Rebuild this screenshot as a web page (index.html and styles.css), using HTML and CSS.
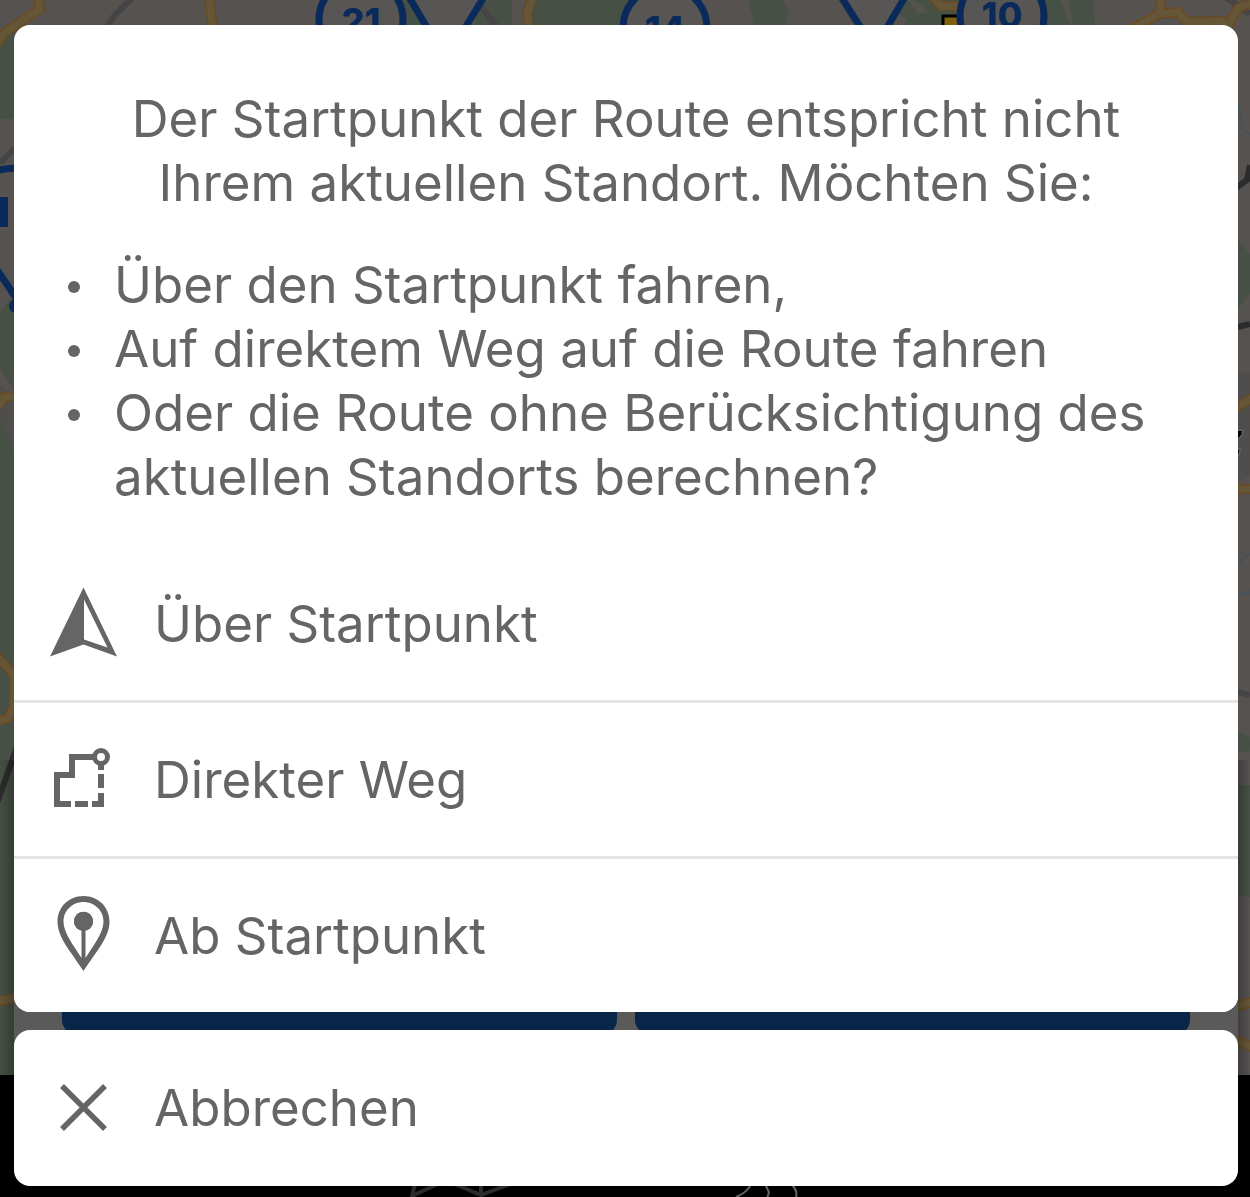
FILE: index.html
```
<!DOCTYPE html>
<html lang="de">
<head>
    <meta charset="UTF-8">
    <meta name="viewport" content="width=device-width, initial-scale=1.0">
    <title>Startpunkt der Route</title>
    <link rel="stylesheet" href="styles.css">
</head>
<body>
    <!-- dimmed map behind the sheet -->
    <svg class="map" viewBox="0 0 1250 1197" preserveAspectRatio="xMidYMin slice" aria-hidden="true">
        <defs>
            <linearGradient id="shadeLeft">
                <stop offset="0" stop-color="#000" stop-opacity="0"/>
                <stop offset="1" stop-color="#000" stop-opacity=".25"/>
            </linearGradient>
            <linearGradient id="shadeRight">
                <stop offset="0" stop-color="#000" stop-opacity=".25"/>
                <stop offset="1" stop-color="#000" stop-opacity="0"/>
            </linearGradient>
        </defs>
        <rect class="land" width="1250" height="1075"/>
        <g class="forest">
            <path d="M0 42L14 32V119H0z"/>
            <path d="M0 312L14 295V390L0 368z"/>
            <path d="M0 415L14 450V1075H0z"/>
            <path d="M398 0h16l26 30h-32zM482 0h30v30h-40zM530 0H690l-5 30H522l6-12zM748 0h35l5 12-2 18h-30z"/>
            <path d="M913 0h48v30h-62l8-10-7-6 8-14 10 14 12-2zM1040 0h20l10 24-4 6h-26zM1069 0h22l-9 16 8 14h-16zM1079 0h14l3 30h-12z"/>
            <path d="M1238 240l12 14v40l-12 14zM1238 732l12 5v14l-12 2zM1238 785h12v112l-12-3z"/>
        </g>
        <path class="patch" d="M0 385L14 395V448L0 415zM1238 372h12v104l-12 6z"/>
        <g class="track">
            <path d="M134 -4L114 16 106 30M0 163L14 149"/>
            <path d="M482 8L498 28M1218 -8L1250 14M1238 692L1250 695"/>
            <path class="dark" d="M1250 165L1247 180 1236 188M1238 327L1250 324M-4 806L18 744"/>
        </g>
        <g class="water">
            <path d="M1238 103L1243 130 1250 134M1240 564Q1242 557 1250 554M1240 594L1250 592"/>
        </g>
        <g class="road-edge">
            <path d="M38 -2L40 9 4 33-4 45M209 -2L213 30M533 -4L527 14 530 30M932 -4L941 6H957"/>
            <path d="M1130 30L1159 14 1162 -4M1159 14L1178 12 1186 22 1222 21 1228 26 1238 8 1254 2"/>
            <path d="M-2 406L4 397 16 396M-4 655L14 675V706L8 718-2 721M-2 1001L16 998"/>
            <path d="M1234 409L1252 398M1234 489H1252M1234 1007L1252 1002M1234 1039L1252 1047"/>
        </g>
        <g class="road">
            <path d="M38 -2L40 9 4 33-4 45M209 -2L213 30M533 -4L527 14 530 30M932 -4L941 6H957"/>
            <path d="M1130 30L1159 14 1162 -4M1159 14L1178 12 1186 22 1222 21 1228 26 1238 8 1254 2"/>
            <path d="M-2 406L4 397 16 396M-4 655L14 675V706L8 718-2 721M-2 1001L16 998"/>
            <path d="M1234 409L1252 398M1234 489H1252M1234 1007L1252 1002M1234 1039L1252 1047"/>
        </g>
        <path class="sign" d="M943 30V16H970V30z"/>
        <g class="route">
            <path class="area" d="M406 -8L432 36H460L487 -8z"/>
            <path class="area" d="M838 -8L866 36H882L908 -8z"/>
            <path d="M-4 268L18 301"/>
            <circle cx="361" cy="20" r="42"/>
            <circle cx="665" cy="28" r="42"/>
            <circle cx="1002" cy="16" r="42"/>
            <path d="M-4 171Q6 168 18 168"/>
        </g>
        <circle class="route-dot" cx="16" cy="306" r="7"/>
        <path class="route-dot" d="M0 197H8V227H0z"/>
        <g class="route-number">
            <text x="361" y="34">21</text>
            <text x="665" y="42">14</text>
            <text x="1002" y="28">10</text>
        </g>
        <text class="town" x="1219" y="454">z</text>
        <rect x="0" y="760" width="14" height="315" fill="url(#shadeLeft)"/>
        <rect x="1238" y="760" width="12" height="315" fill="url(#shadeRight)"/>
        <rect class="panel" x="14" y="800" width="1224" height="275"/>
        <rect class="panel-button" x="62" y="900" width="555" height="134" rx="14"/>
        <rect class="panel-button" x="635" y="900" width="555" height="134" rx="14"/>
        <rect y="1075" width="1250" height="122"/>
        <g class="tab-icon">
            <path d="M416 1180L412 1196 442 1182M450 1182L481 1195 516 1182M481 1180V1195"/>
            <path class="thin" d="M751 1184Q748 1192 736 1197M766 1186L769 1192 767 1199M791 1184Q798 1190 796 1198"/>
        </g>
    </svg>

    <main class="sheet">
        <section class="card">
            <div class="message">
                <p>Der Startpunkt der Route entspricht nicht Ihrem aktuellen Standort. Möchten Sie:</p>
                <ul>
                    <li>Über den Startpunkt fahren,</li>
                    <li>Auf direktem Weg auf die Route fahren</li>
                    <li>Oder die Route ohne Berücksichtigung des aktuellen Standorts berechnen?</li>
                </ul>
            </div>
            <button class="action" type="button">
                <svg class="icon" viewBox="0 0 68 80" aria-hidden="true">
                    <path fill-rule="evenodd" d="M33.500 3.500L67 72.500 33.500 60.500 0 72.500zM34 15.500V55.500L57.500 63.500z"/>
                </svg>
                Über Startpunkt
            </button>
            <button class="action" type="button">
                <svg class="icon" viewBox="0 0 68 80" aria-hidden="true">
                    <g fill="none" stroke="currentColor" stroke-width="6">
                        <path d="M43 17H22V35H7V64H21M25 64H38M42 64H51V53M51 48V34M51 30V22"/>
                        <circle cx="51" cy="17" r="6.500" stroke-width="5"/>
                    </g>
                </svg>
                Direkter Weg
            </button>
            <button class="action" type="button">
                <svg class="icon" viewBox="0 0 68 80" aria-hidden="true">
                    <path fill-rule="evenodd" d="M33.500 0C19 0 7.500 11 7.500 25.500C7.500 42 22 57 33.500 75C45 57 59.500 42 59.500 25.500C59.500 11 48 0 33.500 0zM33.500 6C44.500 6 53.500 14.500 53.500 25.500C53.500 37 43 50 35.500 62V34.500A9.500 9.500 0 1 0 31.500 34.500V62C24 50 13.500 37 13.500 25.500C13.500 14.500 22.500 6 33.500 6z"/>
                    <path d="M32.500 33H34.500V66H32.500z"/>
                    <circle cx="33.500" cy="25.500" r="9.500"/>
                </svg>
                Ab Startpunkt
            </button>
        </section>

        <section class="card">
            <button class="action cancel" type="button">
                <svg class="icon" viewBox="0 0 68 80" aria-hidden="true">
                    <path fill="none" stroke="currentColor" stroke-width="5.500" d="M12 18L55 61M55 18L12 61"/>
                </svg>
                Abbrechen
            </button>
        </section>
    </main>
</body>
</html>
```

FILE: styles.css
```
* {
    box-sizing: border-box;
}
body {
    margin: 0;
    min-height: 100vh;
    position: relative;
    overflow-x: hidden;
    background-color: #000;
    color: #656565;
    font-family: Inter, "Liberation Sans", sans-serif;
    font-size: 51px;
    line-height: 64px;
}

/* map */
.map {
    position: absolute;
    top: 0;
    left: 0;
    width: 100%;
    height: 100%;
}
.land {
    fill: #555250;
}
.forest {
    fill: #465044;
}
.patch {
    fill: #4f4e4c;
}
.track {
    fill: none;
    stroke: #454547;
    stroke-width: 6;
}
.track .dark {
    stroke: #2c2c2c;
}
.water {
    fill: none;
    stroke: #43525b;
    stroke-width: 2;
}
.road-edge {
    fill: none;
    stroke: #6a4a20;
    stroke-width: 10;
}
.road {
    fill: none;
    stroke: #665638;
    stroke-width: 7;
}
.sign {
    fill: #80600c;
    stroke: #000;
    stroke-width: 3;
}
.route {
    fill: #585654;
    stroke: #0a2a5c;
    stroke-width: 7;
}
.route-dot {
    fill: #0a2a5c;
}
.route-number {
    fill: #0a2a5c;
    font-size: 36px;
    font-weight: 800;
    text-anchor: middle;
}
.town {
    font-size: 42px;
    font-style: italic;
    font-weight: 600;
    stroke: #626262;
    stroke-width: 3;
    paint-order: stroke;
}
.panel {
    fill: #5a5a5a;
}
.panel-button {
    fill: #092548;
}
.tab-icon {
    fill: none;
    stroke: #2b2b2b;
    stroke-width: 4;
}
.tab-icon .thin {
    stroke: #666;
    stroke-width: 2;
}

/* action sheet */
.sheet {
    position: relative;
    display: flex;
    flex-direction: column;
    gap: 18px;
    padding: 25px 12px 11px 14px;
}
.card {
    background-color: #fff;
    border-radius: 16px;
    overflow: hidden;
}
.message {
    padding: 62px 48px 38px;
}
.message p {
    margin: 0 0 38px;
    padding: 0 12px;
    text-align: center;
}
.message ul {
    margin: 0;
    padding: 0;
    list-style: none;
}
.message li {
    display: flex;
    gap: 34px;
    padding-left: 6px;
}
.message li::before {
    content: "";
    flex: none;
    width: 12px;
    height: 12px;
    margin-top: 28px;
    border-radius: 50%;
    background-color: #656565;
}
.action {
    display: flex;
    align-items: center;
    gap: 36px;
    width: 100%;
    height: 153px;
    padding: 0 36px;
    border: none;
    background-color: #fff;
    color: inherit;
    font: inherit;
    text-align: left;
    cursor: pointer;
}
.action + .action {
    height: 156px;
    border-top: 3px solid #e5e5e5;
}
.action:active {
    background-color: #eee;
}
.cancel {
    height: 156px;
}
.icon {
    flex: none;
    width: 68px;
    height: 80px;
    fill: currentColor;
}
```
